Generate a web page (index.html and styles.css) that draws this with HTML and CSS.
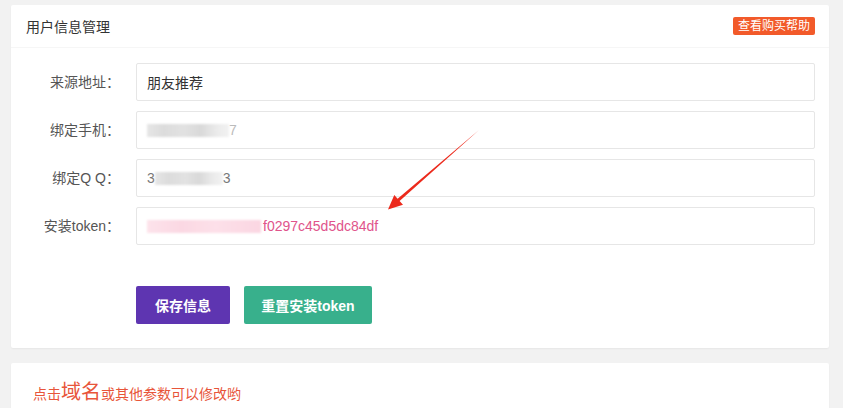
FILE: index.html
```html
<!DOCTYPE html>
<html lang="zh-CN">
<head>
<meta charset="utf-8">
<title>用户信息管理</title>
<link rel="stylesheet" href="styles.css">
</head>
<body>
<div class="card">
  <div class="card-header">
    <span class="card-title">用户信息管理</span>
    <a class="badge">查看购买帮助</a>
  </div>
  <div class="card-body">
    <div class="form-row">
      <label class="form-label">来源地址：</label>
      <div class="input">朋友推荐</div>
    </div>
    <div class="form-row">
      <label class="form-label">绑定手机：</label>
      <div class="input"><span class="mask mask-gray w83"></span><span class="ghost">7</span></div>
    </div>
    <div class="form-row">
      <label class="form-label">绑定Q Q：</label>
      <div class="input"><span class="ghost-dark">3</span><span class="mask mask-gray w68"></span><span class="ghost-dark">3</span></div>
    </div>
    <div class="form-row">
      <label class="form-label">安装token：</label>
      <div class="input token"><span class="mask mask-pink w114"></span><span>f0297c45d5dc84df</span></div>
    </div>
    <div class="actions">
      <button class="btn btn-purple">保存信息</button>
      <button class="btn btn-green">重置安装token</button>
    </div>
  </div>
</div>
<div class="card card-note">
  <p class="note">点击<span class="big">域名</span>或其他参数可以修改哟</p>
</div>
<svg class="arrow" width="843" height="408" viewBox="0 0 843 408">
  <polygon points="479,130 399.6,200.9 403,204.8 388,209.5 394.3,194.9 397.6,198.7" fill="#ec2a1c"/>
</svg>
</body>
</html>
```

FILE: styles.css
```css
* { box-sizing: border-box; }
html, body { margin: 0; padding: 0; }
body {
  background: #f2f2f2;
  padding: 5px 14px 0 11px;
  font-family: "Liberation Sans", "Noto Sans CJK SC", sans-serif;
  font-size: 14px;
  color: #333;
  overflow: hidden;
  height: 408px;
}
.card {
  background: #fff;
  border-radius: 2px;
  box-shadow: 0 1px 2px rgba(0,0,0,0.05);
}
.card-header {
  height: 43px;
  border-bottom: 1px solid #f6f6f6;
  display: flex;
  align-items: center;
  justify-content: space-between;
  padding: 0 14px 0 15px;
}
.card-title { font-size: 14px; color: #333; }
.badge {
  background: #f25a2a;
  color: #fff;
  font-size: 12px;
  line-height: 18px;
  height: 18px;
  padding: 0 5px;
  border-radius: 2px;
}
.card-body {
  padding: 15px 14px 24px 0;
}
.form-row {
  display: flex;
  height: 38px;
  margin-bottom: 10px;
}
.form-label {
  width: 125px;
  height: 38px;
  flex: none;
  text-align: right;
  padding-right: 16px;
  line-height: 38px;
  color: #555;
  white-space: nowrap;
}
.input {
  flex: 1;
  height: 38px;
  border: 1px solid #e6e6e6;
  border-radius: 2px;
  padding: 0 10px;
  display: flex;
  align-items: center;
  color: #333;
  white-space: nowrap;
}
.mask {
  display: inline-block;
  height: 13px;
  filter: blur(1px);
}
.mask-gray {
  background: linear-gradient(90deg, #e6e6e6 0, #dcdcdc 20%, #e2e2e2 45%, #d9d9d9 65%, #ebebeb 85%, #f2f2f2 100%);
}
.mask-pink {
  background: linear-gradient(90deg, #fde3eb 0, #fbd8e3 30%, #fde0e9 60%, #fbd6e2 100%);
}
.w83 { width: 82px; }
.w68 { width: 68px; }
.w114 { width: 114px; margin-right: 2px; }
.ghost { color: #bbb; }
.ghost-dark { color: #777; }
.token { color: #e0548b; }
.actions {
  display: flex;
  gap: 14px;
  padding-left: 125px;
  margin-top: 41px;
}
.btn {
  height: 38px;
  border: none;
  border-radius: 2px;
  color: #fff;
  font-family: inherit;
  font-size: 14px;
  font-weight: bold;
  padding: 0 18px;
  white-space: nowrap;
}
.btn-purple { background: #5e35b1; width: 94px; }
.btn-green { background: #38b08c; width: 128px; padding: 0 10px; }
.card-note {
  margin-top: 15px;
  height: 60px;
  padding: 15px 22px 0;
}
.note {
  margin: 0;
  color: #e8553a;
  font-size: 14px;
  line-height: 28px;
}
.note .big { font-size: 20px; }
.arrow {
  position: absolute;
  left: 0;
  top: 0;
  pointer-events: none;
}
```
